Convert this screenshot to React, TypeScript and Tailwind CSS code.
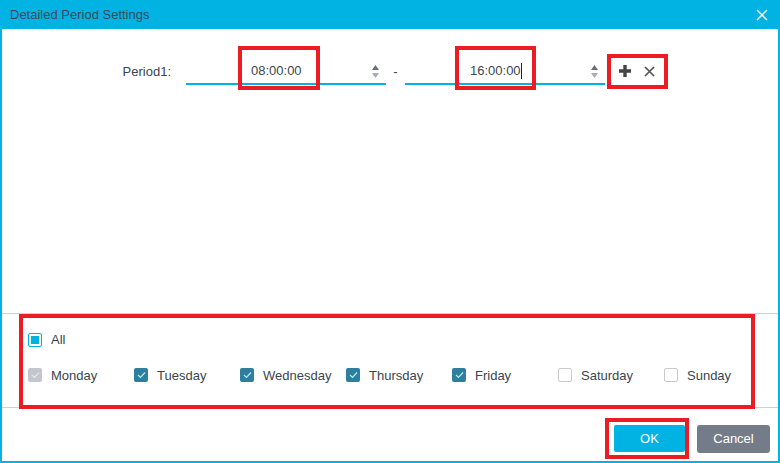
import React from 'react';

const days = [
  { name: 'Monday', state: 'disabled' },
  { name: 'Tuesday', state: 'checked' },
  { name: 'Wednesday', state: 'checked' },
  { name: 'Thursday', state: 'checked' },
  { name: 'Friday', state: 'checked' },
  { name: 'Saturday', state: 'empty' },
  { name: 'Sunday', state: 'empty' },
];

const Check = ({ color }: { color: string }) => (
  <svg width="9" height="8" viewBox="0 0 9 8" fill="none">
    <path d="M1 4l2.5 2.5L8 1.5" stroke={color} strokeWidth="1.2" />
  </svg>
);

const Box: React.FC<{ state: string }> = ({ state }) => {
  if (state === 'checked')
    return (
      <span className="w-[14px] h-[14px] shrink-0 rounded-[2px] bg-[#2e7f9d] flex items-center justify-center">
        <Check color="#bfe6f2" />
      </span>
    );
  if (state === 'disabled')
    return (
      <span className="w-[14px] h-[14px] shrink-0 rounded-[2px] bg-[#c3c6cc] flex items-center justify-center">
        <Check color="#e4e6ea" />
      </span>
    );
  return <span className="w-[14px] h-[14px] shrink-0 rounded-[2px] border border-[#c8cacd] bg-white" />;
};

const Spinner = () => (
  <div className="absolute right-[7px] top-[6px] flex flex-col gap-[3px]">
    <svg width="7" height="5" viewBox="0 0 7 5"><path d="M3.5 0L7 5H0z" fill="#6b6f75" /></svg>
    <svg width="7" height="5" viewBox="0 0 7 5"><path d="M0 0h7L3.5 5z" fill="#a9adb3" /></svg>
  </div>
);

const TimeInput: React.FC<{ value: string; caret?: boolean }> = ({ value, caret }) => (
  <div className="relative w-[200px] shrink-0 h-[26px] border-b-2 border-[#00b3e3] flex items-center pl-[65px]">
    <span>{value}</span>
    {caret && <span className="w-px h-[16px] bg-[#222]" />}
    <Spinner />
  </div>
);

const RedBox: React.FC<{ cls: string }> = ({ cls }) => (
  <div className={`absolute border-4 border-[#ed1c24] pointer-events-none ${cls}`} />
);

export default function App() {
  return (
    <div
      className="relative w-[780px] h-[463px] bg-[#00b3e3] flex flex-col text-[13px] text-[#3b4550]"
      style={{ fontFamily: '"Liberation Sans", Arial, sans-serif' }}
    >
      <div className="h-[29px] flex items-center justify-between pl-[10px] pr-[12px] shrink-0">
        <span className="text-[#3a4a58]">Detailed Period Settings</span>
        <svg width="12" height="12" viewBox="0 0 12 12">
          <path d="M1 1l10 10M11 1L1 11" stroke="#fff" strokeWidth="1.4" />
        </svg>
      </div>
      <div className="flex-1 mx-[2px] mb-[2px] bg-white flex flex-col">
        <div className="h-[285px] border-b border-[#d0d0d0] pt-[30px]">
          <div className="flex items-center">
            <span className="w-[184px] shrink-0 text-right pr-[15px] -mt-[1px]">Period1:</span>
            <TimeInput value="08:00:00" />
            <span className="w-[19px] shrink-0 text-center -mt-[1px]">-</span>
            <TimeInput value="16:00:00" caret />
            <div className="flex items-center gap-[13px] ml-[14px] -mt-[2px]">
              <svg width="12" height="12" viewBox="0 0 12 12" className="shrink-0">
                <path d="M4.3 0h3.4v4.3H12v3.4H7.7V12H4.3V7.7H0V4.3h4.3z" fill="#444" />
              </svg>
              <svg width="11" height="11" viewBox="0 0 11 11" className="shrink-0">
                <path d="M1 1l9 9M10 1L1 10" stroke="#555" strokeWidth="1.7" />
              </svg>
            </div>
          </div>
        </div>
        <div className="h-[94px] border-b border-[#d0d0d0] pl-[26px] pt-[16px] flex flex-col gap-[16px]">
          <div className="flex items-center gap-[9px]">
            <span className="w-[14px] h-[14px] rounded-[2px] border border-[#00b3e3] flex items-center justify-center">
              <span className="w-[8px] h-[8px] bg-[#00b3e3]" />
            </span>
            <span>All</span>
          </div>
          <div className="flex items-center">
            {days.map((d) => (
              <div key={d.name} className="w-[106px] flex items-center gap-[9px]">
                <Box state={d.state} />
                <span>{d.name}</span>
              </div>
            ))}
          </div>
        </div>
        <div className="flex-1 flex items-start pt-[16px] justify-end gap-[11px] pr-[8px]">
          <button className="w-[73px] h-[29px] rounded-[3px] bg-[#00b3e3] text-white border border-white">OK</button>
          <button className="w-[73px] h-[28px] mt-[1px] rounded-[3px] bg-[#737c88] text-white">Cancel</button>
        </div>
      </div>
      <RedBox cls="left-[238px] top-[46px] w-[82px] h-[44px]" />
      <RedBox cls="left-[455px] top-[46px] w-[81px] h-[44px]" />
      <RedBox cls="left-[607px] top-[54px] w-[61px] h-[35px]" />
      <RedBox cls="left-[19px] top-[314px] w-[736px] h-[95px]" />
      <RedBox cls="left-[605px] top-[418px] w-[84px] h-[41px]" />
    </div>
  );
}
